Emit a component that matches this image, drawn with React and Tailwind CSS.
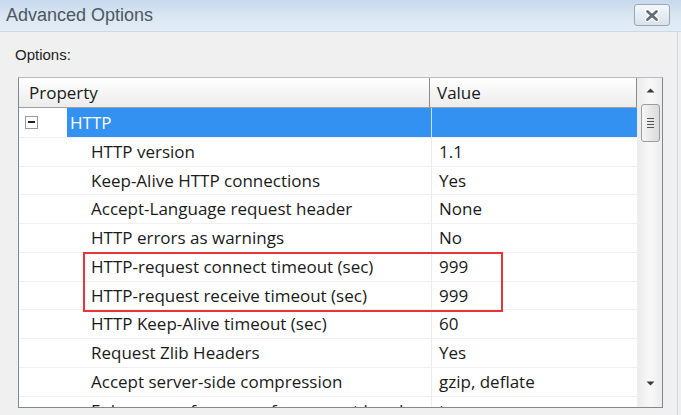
import React from "react";

const rows = [
  ["HTTP version", "1.1"],
  ["Keep-Alive HTTP connections", "Yes"],
  ["Accept-Language request header", "None"],
  ["HTTP errors as warnings", "No"],
  ["HTTP-request connect timeout (sec)", "999"],
  ["HTTP-request receive timeout (sec)", "999"],
  ["HTTP Keep-Alive timeout (sec)", "60"],
  ["Request Zlib Headers", "Yes"],
  ["Accept server-side compression", "gzip, deflate"],
  ["Enhance performance for request headers", "true"],
];

const font = { fontFamily: '"Open Sans", "Noto Sans", sans-serif' };

export default function App() {
  return (
    <div
      className="w-[681px] h-[415px] overflow-hidden bg-[#f0f0f0] flex flex-col relative"
      style={font}
    >
      {/* Title bar */}
      <div className="h-[32px] shrink-0 flex items-start justify-between bg-gradient-to-b from-[#c6d9ec] via-[#d9e6f2] to-[#e4edf6] border-b border-[#cfd9e3]">
        <div
          className="pl-[6px] pt-[4px] text-[18px] leading-[22px] text-[#4c5664]"
          style={{ fontFamily: '"Liberation Sans", Arial, sans-serif' }}
        >
          Advanced Options
        </div>
        <div className="mt-[4px] mr-[11px] w-[36px] h-[22px] rounded-[3px] border border-[#9aa6b4] bg-gradient-to-b from-[#f4f7fb] to-[#d9e3ee] flex items-center justify-center">
          <svg width="16" height="13" viewBox="0 0 16 13">
            <path d="M3.5 2.5 L12.5 10.5 M12.5 2.5 L3.5 10.5" stroke="#ffffff" strokeWidth="5.5" strokeLinecap="round" />
            <path d="M3.5 2.5 L12.5 10.5 M12.5 2.5 L3.5 10.5" stroke="#646d78" strokeWidth="2.8" strokeLinecap="round" />
          </svg>
        </div>
      </div>

      {/* Body */}
      <div className="flex-1 flex flex-col pl-[15px]">
        <div
          className="pt-[14px] h-[45px] text-[15px] leading-[18px] text-[#1e1e1e]"
          style={{ fontFamily: '"Liberation Sans", Arial, sans-serif' }}
        >
          Options:
        </div>

        {/* Grid */}
        <div className="ml-[3px] w-[645px] h-[331px] border border-[#828790] border-t-[#b8bcc2] bg-white flex overflow-hidden relative">
          <div className="w-[618px] flex flex-col">
            {/* Header */}
            <div className="h-[30px] shrink-0 flex border-b border-[#a0a0a0] bg-gradient-to-b from-[#ffffff] to-[#ececec] text-[17px] text-[#1a1a1a]">
              <div className="w-[411px] border-r border-[#8c8c8c] pl-[10px] flex items-center">
                Property
              </div>
              <div className="flex-1 border-r border-[#8c8c8c] pl-[7px] flex items-center">
                Value
              </div>
            </div>

            {/* HTTP category row */}
            <div className="h-[28.75px] shrink-0 flex">
              <div className="w-[48px] flex items-center pl-[6px]">
                <div className="w-[13px] h-[13px] border border-[#9a9a9a] bg-white flex items-center justify-center">
                  <div className="w-[7px] h-[2px] bg-[#222]" />
                </div>
              </div>
              <div className="w-[364px] bg-[#3391f1] text-white text-[17px] pl-[3px] flex items-center">
                HTTP
              </div>
              <div className="w-[1px] bg-[#c9e0f8]" />
              <div className="flex-1 bg-[#3391f1]" />
            </div>

            {rows.map(([p, v]) => (
              <div
                key={p}
                className="h-[28.75px] shrink-0 flex border-t border-[#efefef] text-[17px] text-[#1a1a1a]"
              >
                <div className="w-[412px] pl-[72px] flex items-center whitespace-nowrap overflow-hidden">
                  {p}
                </div>
                <div className="w-[1px] bg-[#ececec]" />
                <div className="flex-1 pl-[7px] flex items-center whitespace-nowrap">{v}</div>
              </div>
            ))}
          </div>

          {/* Scrollbar */}
          <div className="flex-1 border-l border-[#ededed] bg-gradient-to-r from-[#ececec] via-[#f8f8f8] to-[#ececec] flex flex-col items-center">
            <div className="h-[25px] flex items-center justify-center">
              <svg width="9" height="5" viewBox="0 0 9 5">
                <path d="M0.5 4.5 L4.5 0.5 L8.5 4.5 Z" fill="#3a3a3a" />
              </svg>
            </div>
            <div className="mt-[1px] w-[19px] h-[38px] rounded-[3px] border border-[#9c9c9c] bg-gradient-to-r from-[#f6f6f6] to-[#dadada] flex flex-col items-center justify-center gap-[2px]">
              <div className="w-[7px] h-[1px] bg-[#555]" />
              <div className="w-[7px] h-[1px] bg-[#555]" />
              <div className="w-[7px] h-[1px] bg-[#555]" />
              <div className="w-[7px] h-[1px] bg-[#555]" />
            </div>
            <div className="flex-1" />
            <div className="h-[28px] flex items-start justify-center pt-[2px]">
              <svg width="9" height="5" viewBox="0 0 9 5">
                <path d="M0.5 0.5 L4.5 4.5 L8.5 0.5 Z" fill="#3a3a3a" />
              </svg>
            </div>
          </div>

          {/* Highlight box */}
          <div className="absolute left-[64px] top-[174px] w-[420px] h-[60px] border-2 border-[#e8333a] pointer-events-none" />
        </div>
      </div>
      <div className="absolute right-[3px] top-[32px] bottom-0 w-[1px] bg-[#c9d6e3]" />
    </div>
  );
}
